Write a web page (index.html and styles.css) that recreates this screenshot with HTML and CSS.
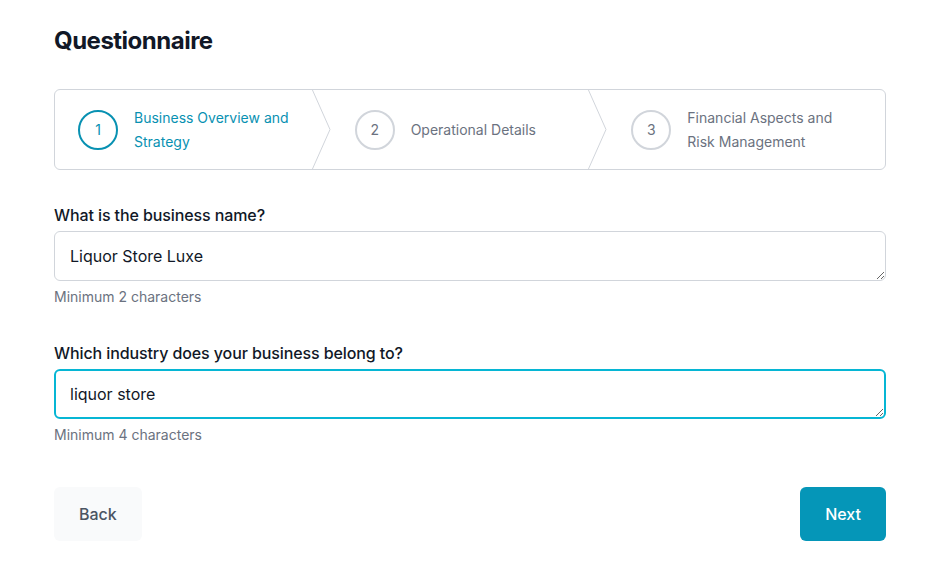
FILE: index.html
```html
<!DOCTYPE html>
<html lang="en">
<head>
<meta charset="utf-8">
<title>Questionnaire</title>
<link rel="stylesheet" href="styles.css">
</head>
<body>
<main class="page">
  <h1 class="title">Questionnaire</h1>
  <ol class="stepper">
    <li class="step step-active">
      <span class="step-num">1</span>
      <span class="step-label">Business Overview and Strategy</span>
      <svg class="chevron" viewBox="0 0 20 100" preserveAspectRatio="none" aria-hidden="true"><polyline points="0,0 18,50 0,100" fill="none" stroke="#d1d5db" stroke-width="1" vector-effect="non-scaling-stroke"/></svg>
    </li>
    <li class="step">
      <span class="step-num">2</span>
      <span class="step-label">Operational Details</span>
      <svg class="chevron" viewBox="0 0 20 100" preserveAspectRatio="none" aria-hidden="true"><polyline points="0,0 18,50 0,100" fill="none" stroke="#d1d5db" stroke-width="1" vector-effect="non-scaling-stroke"/></svg>
    </li>
    <li class="step">
      <span class="step-num">3</span>
      <span class="step-label">Financial Aspects and<br>Risk Management</span>
    </li>
  </ol>

  <div class="field">
    <label class="field-label" for="name">What is the business name?</label>
    <textarea id="name" class="field-input" rows="1">Liquor Store Luxe</textarea>
    <p class="field-help">Minimum 2 characters</p>
  </div>

  <div class="field">
    <label class="field-label" for="industry">Which industry does your business belong to?</label>
    <textarea id="industry" class="field-input field-input-focus" rows="1">liquor store</textarea>
    <p class="field-help">Minimum 4 characters</p>
  </div>

  <div class="actions">
    <button class="btn btn-back" type="button">Back</button>
    <button class="btn btn-next" type="button">Next</button>
  </div>
</main>
</body>
</html>
```
FILE: styles.css
```css
* { box-sizing: border-box; }
html, body { margin: 0; background: #fff; }
body {
  font-family: Inter, "Noto Sans", "Liberation Sans", sans-serif;
  color: #111827;
}
.page {
  padding: 25px 60px 0 54px;
}
.title {
  margin: 0 0 32px;
  font-size: 24px;
  line-height: 32px;
  font-weight: 700;
  color: #111827;
  letter-spacing: -0.5px;
}
.stepper {
  list-style: none;
  margin: 0;
  padding: 0;
  display: grid;
  grid-template-columns: repeat(3, 1fr);
  border: 1px solid #d1d5db;
  border-radius: 6px;
  height: 81px;
}
.step {
  position: relative;
  display: flex;
  align-items: center;
  gap: 16px;
  padding: 0 23px;
}
.step-num {
  flex: none;
  width: 40px;
  height: 40px;
  border: 2px solid #d1d5db;
  border-radius: 50%;
  display: flex;
  align-items: center;
  justify-content: center;
  font-size: 14px;
  color: #6b7280;
}
.step-label {
  font-size: 14px;
  line-height: 24px;
  color: #6b7280;
}
.step-active .step-num {
  border-color: #0891b2;
  color: #0891b2;
}
.step-active .step-label { color: #0891b2; }
.chevron {
  position: absolute;
  top: -1px;
  right: 0;
  width: 20px;
  height: calc(100% + 2px);
}
.field { margin-top: 33px; }
.field + .field { margin-top: 34px; }
.field-label {
  display: block;
  font-size: 16px;
  line-height: 24px;
  font-weight: 500;
  color: #111827;
  letter-spacing: -0.1px;
}
.field-input {
  display: block;
  width: 100%;
  margin-top: 4px;
  height: 50px;
  padding: 12px 15px;
  font-family: inherit;
  font-size: 16px;
  line-height: 24px;
  color: #111827;
  border: 1px solid #d1d5db;
  border-radius: 6px;
  background: #fff;
  outline: none;
}
.field-input-focus {
  border: 2px solid #06b6d4;
  padding: 11px 14px;
}
.field-help {
  margin: 6px 0 0;
  font-size: 14px;
  line-height: 20px;
  color: #6b7280;
}
.actions {
  margin-top: 42px;
  display: flex;
  justify-content: space-between;
}
.btn {
  font-family: inherit;
  font-size: 16px;
  line-height: 24px;
  font-weight: 500;
  padding: 15px 25px;
  border: none;
  border-radius: 6px;
}
.btn-back {
  background: #f9fafb;
  color: #4b5563;
}
.btn-next {
  background: #0596b8;
  color: #fff;
}
```
